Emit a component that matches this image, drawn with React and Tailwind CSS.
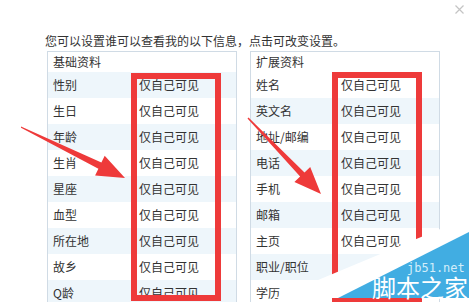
import React from "react";

const leftRows = [
  ["性别", "仅自己可见"],
  ["生日", "仅自己可见"],
  ["年龄", "仅自己可见"],
  ["生肖", "仅自己可见"],
  ["星座", "仅自己可见"],
  ["血型", "仅自己可见"],
  ["所在地", "仅自己可见"],
  ["故乡", "仅自己可见"],
  ["Q龄", "仅自己可见"],
];
const rightRows = [
  ["姓名", "仅自己可见"],
  ["英文名", "仅自己可见"],
  ["地址/邮编", "仅自己可见"],
  ["电话", "仅自己可见"],
  ["手机", "仅自己可见"],
  ["邮箱", "仅自己可见"],
  ["主页", "仅自己可见"],
  ["职业/职位", ""], // covered by the watermark in the shot
  ["学历", ""],
];

const Panel = ({ title, rows, labelWidth, blueOdd }) => {
  return (
    <div className="w-[190px] border border-[#d0dbe5] shrink-0">
      {/* header row */}
      <div className="h-[20px] leading-[20px] pl-[5px] text-[#333]">{title}</div>
      {rows.map(([label, value], index) => {
        const blue = blueOdd ? index % 2 === 0 : index % 2 === 1;
        return (
          <div
            key={label}
            className={
              blue
                ? "flex items-center h-[26px] bg-[#eef6fb]"
                : "flex items-center h-[26px] bg-white"
            }
          >
            <span className={labelWidth}>{label}</span>
            <span>{value}</span>
          </div>
        );
      })}
    </div>
  );
};

const App = () => {
  return (
    <div
      className="relative w-[469px] h-[302px] overflow-hidden bg-white text-[12px] text-[#333]"
      style={{ fontFamily: '"Noto Sans CJK SC", "Noto Sans", sans-serif' }}
    >
      {/* close button */}
      <svg className="absolute top-[5px] left-[455px]" width="9" height="9" viewBox="0 0 9 9">
        <path d="M0.5 0.5 L8.5 8.5 M8.5 0.5 L0.5 8.5" stroke="#c4c4c4" strokeWidth="1.2" />
      </svg>

      <p className="pt-[33px] pl-[45px] leading-[16px]">
        您可以设置谁可以查看我的以下信息，点击可改变设置。
      </p>

      <div className="flex gap-[13px] pl-[47px] mt-[2px]">
        <Panel title="基础资料" rows={leftRows} labelWidth="w-[91px] pl-[5px]" blueOdd />
        <Panel title="扩展资料" rows={rightRows} labelWidth="w-[90px] pl-[5px]" blueOdd={false} />
      </div>

      {/* red annotation boxes */}
      <div className="absolute left-[131px] top-[73px] w-[90px] h-[228px] border-[6px] border-[#ee3a3a]" />
      <div className="absolute left-[332px] top-[72px] w-[90px] h-[230px] border-[6px] border-[#ee3a3a]" />

      {/* red arrows */}
      <svg className="absolute left-0 top-0" width="469" height="302" viewBox="0 0 469 302">
        <polygon
          points="21,126.5 101.4,162.6 104.7,155.8 125,178 95.1,175.6 98.4,168.8 21,127.8"
          fill="#ee3a3a"
        />
        <polygon
          points="248.5,117.5 304.5,172.4 310.2,166.9 321,194 294.4,182.1 300.1,176.6 247.5,118.5"
          fill="#ee3a3a"
        />
      </svg>

      {/* watermark */}
      <svg className="absolute left-[260px] top-[210px]" width="209" height="88" viewBox="0 0 209 88">
        <polygon points="15,88 209,7 209,88" fill="#ffffff" />
        <polygon points="78,88 209,22 209,88" fill="#41ade2" />
      </svg>
      <span
        className="absolute left-[407px] top-[262px] text-[12px] leading-[12px] text-[#d3edfa]"
        style={{ fontFamily: '"DejaVu Sans Mono", monospace' }}
      >
        jb51.net
      </span>
      <span className="absolute left-[372px] top-[275px] text-[24px] leading-[24px] text-white">
        脚本之家
      </span>
    </div>
  );
};

export default App;
